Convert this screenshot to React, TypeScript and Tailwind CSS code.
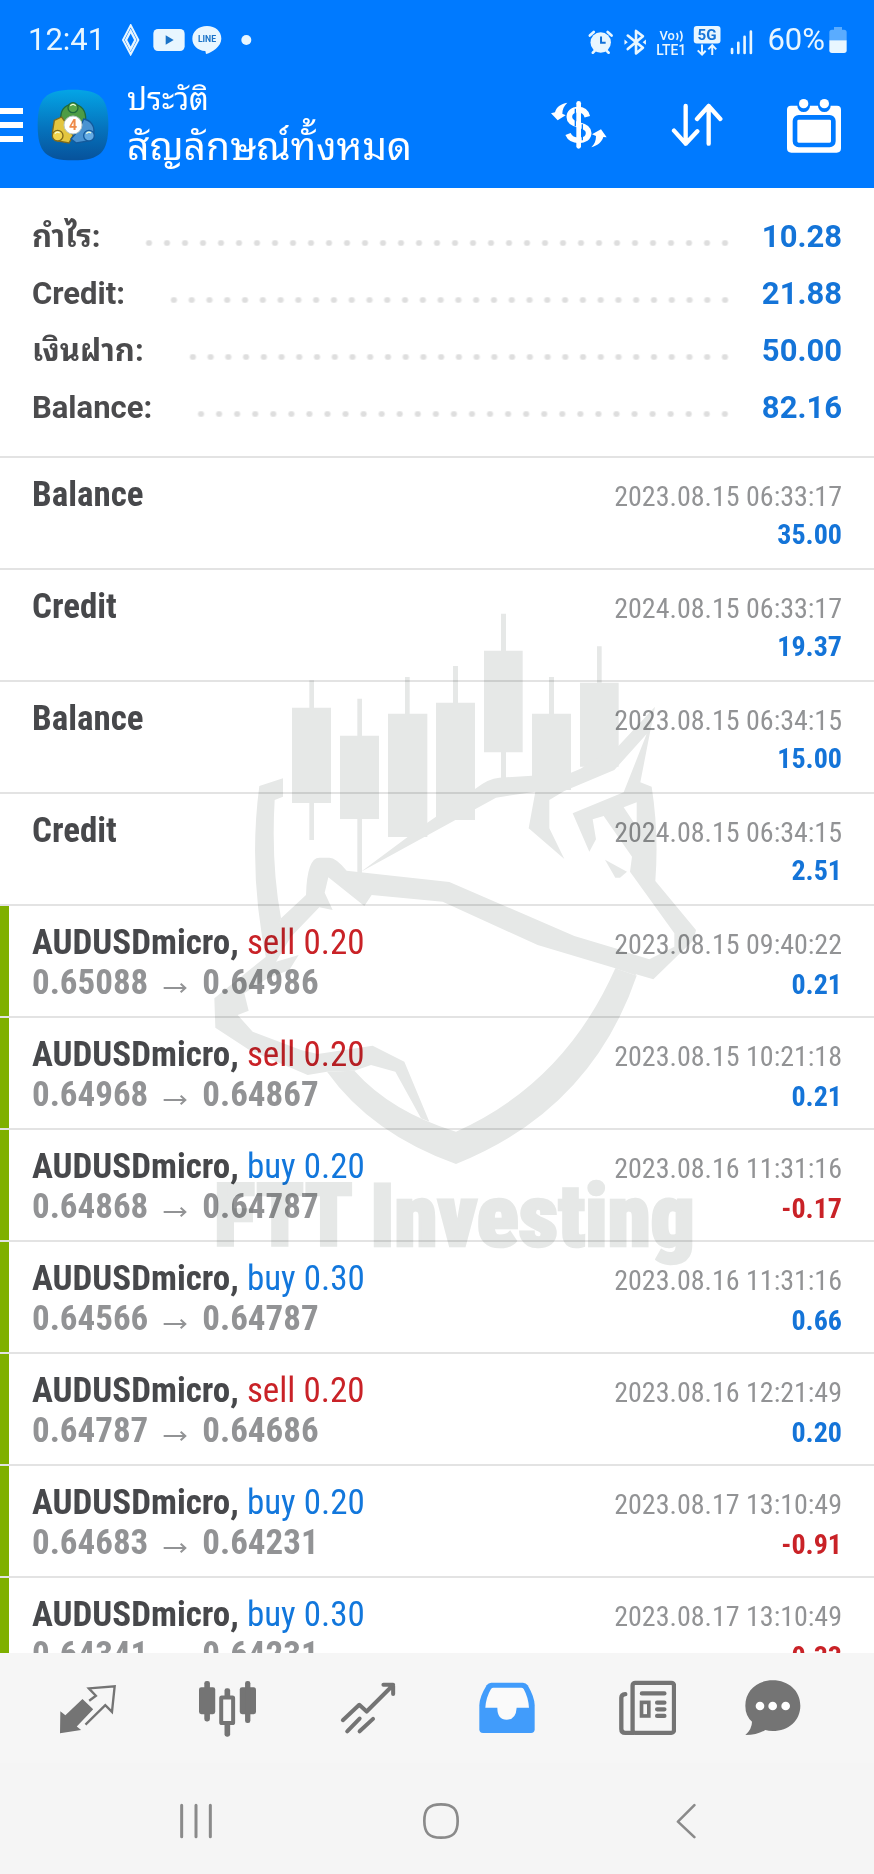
import type { ReactNode } from "react";

type Entry = {
  name: string;
  side?: "sell" | "buy";
  volume?: string;
  open?: string;
  close?: string;
  time: string;
  amount: string;
};

const summary = [
  { label: "กำไร:", value: "10.28" },
  { label: "Credit:", value: "21.88" },
  { label: "เงินฝาก:", value: "50.00" },
  { label: "Balance:", value: "82.16" },
];

const entries: Entry[] = [
  { name: "Balance", time: "2023.08.15 06:33:17", amount: "35.00" },
  { name: "Credit", time: "2024.08.15 06:33:17", amount: "19.37" },
  { name: "Balance", time: "2023.08.15 06:34:15", amount: "15.00" },
  { name: "Credit", time: "2024.08.15 06:34:15", amount: "2.51" },
  { name: "AUDUSDmicro", side: "sell", volume: "0.20", open: "0.65088", close: "0.64986", time: "2023.08.15 09:40:22", amount: "0.21" },
  { name: "AUDUSDmicro", side: "sell", volume: "0.20", open: "0.64968", close: "0.64867", time: "2023.08.15 10:21:18", amount: "0.21" },
  { name: "AUDUSDmicro", side: "buy", volume: "0.20", open: "0.64868", close: "0.64787", time: "2023.08.16 11:31:16", amount: "-0.17" },
  { name: "AUDUSDmicro", side: "buy", volume: "0.30", open: "0.64566", close: "0.64787", time: "2023.08.16 11:31:16", amount: "0.66" },
  { name: "AUDUSDmicro", side: "sell", volume: "0.20", open: "0.64787", close: "0.64686", time: "2023.08.16 12:21:49", amount: "0.20" },
  { name: "AUDUSDmicro", side: "buy", volume: "0.20", open: "0.64683", close: "0.64231", time: "2023.08.17 13:10:49", amount: "-0.91" },
  { name: "AUDUSDmicro", side: "buy", volume: "0.30", open: "0.64341", close: "0.64231", time: "2023.08.17 13:10:49", amount: "-0.33" },
];

const StatusBar = () => (
  <div className="flex h-20 items-center justify-between pl-7 pr-[27px] text-[31px] text-[#e8f6ff]">
    <div className="flex items-center">
      <span className="w-[94px]">12:41</span>
      <svg viewBox="365 72 390 96" className="h-8 w-[130px]" fill="none">
        <path d="M391 76 414 120 391 163 368 120Z" stroke="currentColor" strokeWidth="6" />
        <path d="M391 93 405 120 391 147 377 120Z" stroke="currentColor" strokeWidth="7" />
        <rect x="459" y="87" width="94" height="66" rx="14" fill="currentColor" />
        <path d="M496 106 520 120 496 134Z" fill="#1a73c8" />
        <path d="M620 78c25 0 43 16 43 38 0 24-28 40-45 46-4-2 0-8-4-9-22-2-38-17-38-37 0-22 19-38 44-38z" fill="currentColor" />
        <text x="620" y="126" textAnchor="middle" fontSize="26" fontWeight="700" fill="#1a73c8">LINE</text>
        <circle cx="738" cy="120" r="15" fill="currentColor" />
      </svg>
    </div>
    <div className="flex items-center gap-3">
      <svg viewBox="465 66 504 100" className="h-[33px] w-[168px]" fill="none" stroke="currentColor">
        <circle cx="504" cy="122" r="31" fill="currentColor" stroke="none" />
        <path d="M471 101 483 90M537 101 525 90M480 153 488 145M528 153 520 145" strokeWidth="8" strokeLinecap="round" />
        <path d="M505 104V123H519" stroke="#1170d8" strokeWidth="6" />
        <path d="M586 101 632 138 611 155V87L632 103 586 142" strokeWidth="8" strokeLinejoin="round" strokeLinecap="round" />
        <path d="M576 113 586 121 576 129ZM641 113 631 121 641 129Z" fill="currentColor" stroke="none" />
        <g fill="currentColor" stroke="none">
          <text x="682" y="116" fontSize="39" fontWeight="500">Vo</text>
          <text x="672" y="159" fontSize="42" fontWeight="500">LTE1</text>
        </g>
        <path d="M734 93q7 10 0 21M745 87q11 16 0 32" strokeWidth="5" />
        <rect x="786" y="72" width="81" height="53" rx="9" fill="currentColor" stroke="none" />
        <text x="826" y="115" textAnchor="middle" fontSize="46" fontWeight="700" fill="#1675d8" stroke="none">5G</text>
        <path d="M811 128V157M798 146 811 159 822 147M842 160V131M830 143 842 130 854 143" strokeWidth="6" />
        <path d="M902 142V154M921 123V154M940 105V154M959 89V154" strokeWidth="8" strokeLinecap="round" />
      </svg>
      <div className="flex items-center gap-1">
        <span>60%</span>
        <svg viewBox="0 0 52 78" className="h-[26px] w-[18px]">
          <path d="M14 0H38V8H44Q52 8 52 16V40H0V16Q0 8 8 8H14Z" fill="#5aacff" />
          <path d="M0 40H52V70Q52 78 44 78H8Q0 78 0 70Z" fill="currentColor" />
        </svg>
      </div>
    </div>
  </div>
);

const AppLogo = () => (
  <svg viewBox="0 0 216 216" className="h-[72px] w-[72px] shrink-0">
    <defs>
      <linearGradient id="tile" x1="0" y1="0" x2="0" y2="1">
        <stop offset="0" stopColor="#04a5e6" />
        <stop offset="0.55" stopColor="#0573bd" />
        <stop offset="1" stopColor="#07529b" />
      </linearGradient>
    </defs>
    <path d="M108 2C190 2 214 26 214 108S190 214 108 214 2 190 2 108 26 2 108 2Z" fill="url(#tile)" />
    <g strokeWidth="4">
      <path d="M72 96C68 66 82 46 108 46S148 66 146 96L132 106 84 106Z" fill="#4d9c45" stroke="#1f6a3c" />
      <path d="M52 94 74 84 88 104 108 140 96 162 62 156 46 132Z" fill="#e3c540" stroke="#806a1b" />
      <path d="M140 90C162 94 174 112 170 134L154 156 118 162 102 150 128 120Z" fill="#4a93d2" stroke="#145a9c" />
      <circle cx="108" cy="56" r="15" fill="#57a84a" stroke="#1f6a3c" />
      <circle cx="62" cy="140" r="16" fill="#f1d54e" stroke="#806a1b" />
      <circle cx="156" cy="140" r="16" fill="#64abe4" stroke="#145a9c" />
    </g>
    <path d="M100 50q8-8 16 0M54 134q6-8 14-2M148 134q6-8 14-2" stroke="#f4ffd8" strokeWidth="4" fill="none" />
    <circle cx="108" cy="108" r="27" fill="#fff" stroke="#b9c9c6" strokeWidth="3" />
    <text x="108" y="123" textAnchor="middle" fontSize="42" fontWeight="700" fill="#ee8a4a">4</text>
  </svg>
);

const Header = () => (
  <header className="shrink-0 bg-[#007aff] pb-[18px] text-white">
    <StatusBar />
    <div className="flex h-[90px] items-center">
      <button aria-label="Menu" className="mr-[14px] flex w-[23px] shrink-0 flex-col gap-2">
        <span className="h-[6px] bg-white" />
        <span className="h-[6px] bg-white" />
        <span className="h-[6px] bg-white" />
      </button>
      <AppLogo />
      <div className="ml-[18px] flex-1 whitespace-nowrap pt-1">
        <p className="text-[31px] leading-10">ประวัติ</p>
        <h1 className="text-[39px] leading-[54px]">สัญลักษณ์ทั้งหมด</h1>
      </div>
      <div className="flex shrink-0 items-center gap-16 pr-[33px]">
        <button aria-label="Currency">
          <svg viewBox="350 302 168 144" className="h-12 w-14" fill="none" stroke="currentColor">
            <path d="M433 309V438" strokeWidth="14" strokeLinecap="round" />
            <path d="M459 349C455 334 444 328 431 328 414 328 405 338 405 350 405 364 418 370 434 374 452 378 463 386 463 398 463 412 450 420 434 420 418 420 406 413 401 401" strokeWidth="17" />
            <path d="M399 307C379 311 366 320 362 336L350 339 370 360 394 345 384 340C384 327 389 316 399 307ZM471 441C491 435 503 424 507 410L517 411 500 387 473 402 485 407C485 421 481 431 471 441Z" fill="currentColor" stroke="none" />
            <path d="M423 325V378M444 372V420" stroke="#007aff" strokeWidth="4" />
          </svg>
        </button>
        <button aria-label="Sort">
          <svg viewBox="710 302 156 144" className="h-12 w-[52px]" fill="none" stroke="currentColor" strokeWidth="13" strokeLinecap="round" strokeLinejoin="round">
            <path d="M754 317V430M719 391 754 430 789 393M823 430V317M788 356 823 317 858 356" />
          </svg>
        </button>
        <button aria-label="Period">
          <svg viewBox="1058 288 162 165" className="h-[55px] w-[54px]">
            <path d="M1070 311H1089A19 19 0 0 0 1127 311H1151A19 19 0 0 0 1189 311H1208Q1220 311 1220 323V439Q1220 452 1207 452H1071Q1058 452 1058 439V323Q1058 311 1070 311Z" fill="currentColor" />
            <circle cx="1108" cy="305" r="14" fill="currentColor" />
            <circle cx="1170" cy="305" r="14" fill="currentColor" />
            <rect x="1082" y="346" width="115" height="83" rx="11" fill="none" stroke="#007aff" strokeWidth="14" />
          </svg>
        </button>
      </div>
    </div>
  </header>
);

const Summary = () => (
  <dl className="px-8 pb-5 pt-5 text-[31px] font-bold leading-[57px]">
    {summary.map((item) => (
      <div key={item.label} className="flex items-center">
        <dt className="text-[#4b4b4d]">{item.label}</dt>
        <dd className="flex flex-1 items-center text-[#1474d8]">
          <span className="ml-10 mr-7 mt-3 h-[6px] flex-1 bg-[radial-gradient(circle,#dedede_2px,transparent_4px)] bg-[length:18px_6px] bg-repeat-round" />
          {item.value}
        </dd>
      </div>
    ))}
  </dl>
);

const HistoryRow = ({ entry }: { entry: Entry }) => {
  const isDeal = Boolean(entry.side);
  const loss = entry.amount.startsWith("-");

  return (
    <li className="flex h-28 border-t-2 border-[#e3e3e3] font-['Roboto_Condensed','Liberation_Sans_Narrow',Roboto,sans-serif]">
      <span className={isDeal ? "w-[9px] bg-[#7fb000]" : "w-[9px]"} />
      <div className="flex-1 whitespace-nowrap pl-[23px] pr-8 pt-[18px] leading-[38px]">
        <div className="flex items-baseline justify-between">
          <p className="text-[35px] font-bold text-[#47484b]">
            {entry.name}
            {isDeal && (
              <>
                ,{" "}
                <span className={entry.side === "sell" ? "font-normal text-[#c92227]" : "font-normal text-[#1277dc]"}>
                  {entry.side} {entry.volume}
                </span>
              </>
            )}
          </p>
          <time className="text-[28px] text-[#929395]">{entry.time}</time>
        </div>
        <div className="flex items-baseline justify-between">
          <p className="flex items-baseline gap-[15px] text-[35px] font-bold text-[#929395]">
            {isDeal && (
              <>
                <span>{entry.open}</span>
                <svg viewBox="0 0 72 36" className="h-3 w-6" fill="none" stroke="currentColor" strokeWidth="6">
                  <path d="M2 18H66M53 5 67 18 53 31" />
                </svg>
                <span>{entry.close}</span>
              </>
            )}
          </p>
          <span className={loss ? "text-[28px] font-bold text-[#c92227]" : "text-[28px] font-bold text-[#1474d8]"}>
            {entry.amount}
          </span>
        </div>
      </div>
    </li>
  );
};

const Watermark = () => (
  <svg viewBox="0 0 1500 2000" fill="#e6e8e7" className="pointer-events-none absolute left-[23%] top-[600px] w-[500px] mix-blend-multiply">
    {/* candles */}
    <path d="M273 323H390V609H273ZM325 241H339V720H325ZM417 407H534V657H417ZM469 296H483V820H469ZM561 341H679V711H561ZM612 231H626V350H612ZM705 308H822V660H705ZM756 198H771V310H756ZM849 152H965V457H849ZM900 41H915V540H900ZM993 341H1110V570H993ZM1044 231H1059V350H1044ZM1137 248H1253V500H1137ZM1188 139H1202V250H1188Z" />
    {/* brow, horn and muzzle */}
    <path d="M480 815 620 711 679 668 705 650 822 567Q862 535 895 533L993 527 1110 518 1137 507 1253 437 1362 320 1318 547 1352 560Q1374 700 1363 843L1485 990 1478 1020 1357 1138 1243 1105 1255 1050 1345 1078 1420 1040V1000L1287 815 1293 770 1208 648 1175 658 1185 718 1165 755 1115 640 1268 577 1337 402 1240 510 1090 573 1045 600V685L1090 777 983 685 1003 575 885 593Z" />
    <path d="M1268 622 1307 607V680Z" fill="#fff" />
    <path d="M1212 779 1278 815 1257 833 1243 833Z" />
    {/* ear, nose bridge and jaw */}
    <path d="M240 955 315 885Q318 773 355 773H385Q405 773 437 812L745 846 1120 1008 1260 1050 1307 1127 1243 1105 1010 1035 725 905 512 885 490 918 382 832 371 878 395 930 355 922 270 1010 225 1085 293 1065 265 1110 200 1135 130 1180 143 1232 110 1245 155 1295 300 1350 350 1362 515 1337 610 1385 685 1565 660 1555 583 1415 510 1395 460 1412 378 1415 320 1425 145 1350 43 1283 40 1195 195 1070Z" />
    {/* shield */}
    <path d="M175 558 246 535V590L221 600Q210 790 240 955L200 1100Q140 820 175 558ZM378 1415 460 1412Q570 1535 765 1595 1090 1450 1243 1105L1307 1127Q1170 1530 765 1692 510 1600 378 1415Z" />
    <text x="760" y="1938" textAnchor="middle" fontSize="260" fontWeight="900" stroke="#e6e8e7" strokeWidth="8" className="font-['Roboto_Condensed','Liberation_Sans_Narrow',Roboto,sans-serif]">
      FTT Investing
    </text>
  </svg>
);

const tabs: { label: string; active?: boolean; icon: ReactNode }[] = [
  {
    label: "Quotes",
    icon: (
      <svg viewBox="178 360 170 170" className="h-[57px] w-[57px]" fill="none" stroke="currentColor" strokeWidth="7">
        <path d="M182 453 197 465 248 417 280 447 231 499 244 509 181 519Z" fill="currentColor" stroke="none" />
        <path d="M268 422 288 407 267 385 344 379 336 455 316 435 257 493" />
      </svg>
    ),
  },
  {
    label: "Charts",
    icon: (
      <svg viewBox="597 361 172 170" className="h-[57px] w-[57px]" fill="currentColor">
        <rect x="597" y="382" width="49" height="81" rx="7" />
        <rect x="613" y="363" width="17" height="122" rx="7" />
        <rect x="720" y="382" width="49" height="81" rx="7" />
        <rect x="736" y="363" width="16" height="127" rx="7" />
        <rect x="674" y="385" width="17" height="146" rx="7" />
        <rect x="664" y="413" width="36" height="77" rx="2" fill="#f6f6f6" stroke="currentColor" strokeWidth="12" />
      </svg>
    ),
  },
  {
    label: "Trade",
    icon: (
      <svg viewBox="1020 361 166 170" className="h-[57px] w-[56px]" fill="none" stroke="currentColor" strokeWidth="12" strokeLinecap="round" strokeLinejoin="round">
        <path d="M1028 481 1077 435 1099 455 1178 376M1149 375H1178V403M1041 514 1078 476M1078 514 1118 477" />
      </svg>
    ),
  },
  {
    label: "History",
    active: true,
    icon: (
      <svg viewBox="137 360 168 168" className="h-14 w-14">
        <path d="M174 368H269Q278 368 283 376 304 412 304 436V508Q304 519 293 519H149Q138 519 138 508V436Q138 412 160 376 165 368 174 368Z" fill="currentColor" />
        <path d="M180 383H264Q268 383 271 387 285 412 287 443H250Q248 479 220 479T192 443H156Q158 412 173 387 176 383 180 383Z" fill="#fafafa" />
      </svg>
    ),
  },
  {
    label: "News",
    icon: (
      <svg viewBox="557 361 172 168" className="h-14 w-[57px]" fill="none" stroke="currentColor" strokeWidth="13" strokeLinecap="round">
        <rect x="598" y="369" width="125" height="151" rx="8" />
        <path d="M576 403Q564 404 564 414V508Q564 520 576 520H602M626 401H694M672 429H694M672 449H694M672 469H694" />
        <rect x="625" y="428" width="22" height="41" strokeWidth="11" />
      </svg>
    ),
  },
  {
    label: "Messages",
    icon: (
      <svg viewBox="933 361 168 168" className="h-14 w-14" fill="currentColor">
        <path d="M1016 362C1064 362 1099 394 1099 438S1064 514 1016 514Q1004 514 994 511 970 526 934 526 954 508 954 486 934 468 934 438C934 394 968 362 1016 362Z" />
        <g fill="#fff">
          <circle cx="978" cy="439" r="13" />
          <circle cx="1016" cy="439" r="13" />
          <circle cx="1055" cy="439" r="13" />
        </g>
      </svg>
    ),
  },
];

const App = () => (
  <div className="relative flex h-screen flex-col overflow-hidden bg-white font-[Roboto,'Noto_Sans_Thai_Looped','Droid_Sans_Thai',Loma,Waree,'Noto_Sans',sans-serif]">
    <Header />
    <main className="min-h-0 flex-1 overflow-y-auto [scrollbar-width:none]">
      <Summary />
      <ul>
        {entries.map((entry, i) => (
          <HistoryRow key={i} entry={entry} />
        ))}
      </ul>
    </main>
    <Watermark />
    <nav className="grid h-[110px] shrink-0 grid-cols-[repeat(5,5fr)_4fr] items-center justify-items-center bg-[#f6f6f6] pl-[18px] pr-[45px] text-[#747474]">
      {tabs.map((tab) => (
        <button key={tab.label} aria-label={tab.label} className={tab.active ? "text-[#419cfb]" : ""}>
          {tab.icon}
        </button>
      ))}
    </nav>
    <div className="grid h-[111px] shrink-0 grid-cols-3 items-center justify-items-center bg-[#f5f5f5] pl-[73px] pr-[66px] pt-1 text-[#8a8a8a]">
      <button aria-label="Recent apps">
        <svg viewBox="538 730 104 108" className="h-9 w-9" stroke="currentColor" strokeWidth="9" strokeLinecap="round">
          <path d="M547 737V831M590 737V831M633 737V831" />
        </svg>
      </button>
      <button aria-label="Home">
        <svg viewBox="0 0 108 108" className="h-9 w-9" fill="none" stroke="currentColor" strokeWidth="8">
          <path d="M54 4C90 4 104 18 104 54S90 104 54 104 4 90 4 54 18 4 54 4Z" />
        </svg>
      </button>
      <button aria-label="Back">
        <svg viewBox="726 728 62 110" className="h-9 w-5" fill="none" stroke="currentColor" strokeWidth="8" strokeLinecap="round" strokeLinejoin="round">
          <path d="M783 734 732 785 783 833" />
        </svg>
      </button>
    </div>
  </div>
);

export default App;
